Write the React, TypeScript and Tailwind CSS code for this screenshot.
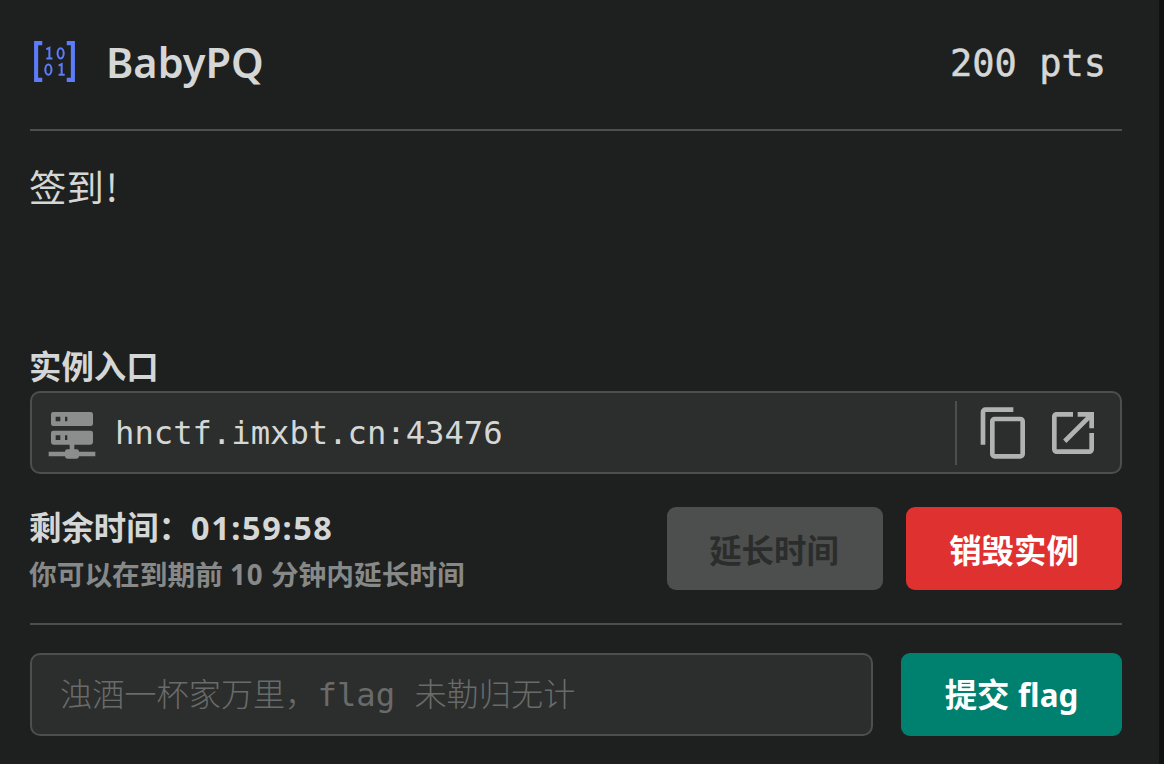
import React, { useState } from "react";

interface IconProps {
  path: string;
  className?: string;
}

const ICONS = {
  server:
    "M13,19H14A1,1 0 0,1 15,20H22V22H15A1,1 0 0,1 14,23H10A1,1 0 0,1 9,22H2V20H9A1,1 0 0,1 10,19H11V17H4A1,1 0 0,1 3,16V12A1,1 0 0,1 4,11H20A1,1 0 0,1 21,12V16A1,1 0 0,1 20,17H13V19M4,3H20A1,1 0 0,1 21,4V8A1,1 0 0,1 20,9H4A1,1 0 0,1 3,8V4A1,1 0 0,1 4,3M9,7H10V5H9V7M9,15H10V13H9V15M5,5V7H7V5H5M5,13V15H7V13H5Z",
  copy: "M19,21H8V7H19M19,5H8A2,2 0 0,0 6,7V21A2,2 0 0,0 8,23H19A2,2 0 0,0 21,21V7A2,2 0 0,0 19,5M16,1H4A2,2 0 0,0 2,3V17H4V3H16V1Z",
  open: "M14,3V5H17.59L7.76,14.83L9.17,16.24L19,6.41V10H21V3M19,19H5V5H12V3H5C3.89,3 3,3.9 3,5V19A2,2 0 0,0 5,21H19A2,2 0 0,0 21,19V12H19V19Z",
};

const Icon: React.FC<IconProps> = ({ path, className }) => (
  <svg viewBox="0 0 24 24" fill="currentColor" className={className}>
    <path d={path} />
  </svg>
);

const MatrixIcon: React.FC = () => (
  <svg
    viewBox="0 0 24 24"
    fill="none"
    stroke="currentColor"
    className="size-[49px] shrink-0 text-[#5c7cfa]"
  >
    <path d="M6,3H3V21H6M18,3H21V21H18" strokeWidth="2" />
    <ellipse cx="15" cy="8" rx="1.5" ry="2.5" />
    <ellipse cx="9" cy="16" rx="1.5" ry="2.5" />
    <path d="M8,6L9.5,5.3V10.5M8,10.5H11M14,14L15.5,13.3V18.5M14,18.5H17" />
  </svg>
);

const ChallengePage: React.FC = () => {
  const [flag, setFlag] = useState("");
  const entry = "hnctf.imxbt.cn:43476";

  const handleCopy = () => navigator.clipboard?.writeText(entry);

  return (
    <div className="flex h-[764px] w-[1164px] bg-[#101111] font-['Noto_Sans','Noto_Sans_CJK_SC',sans-serif] text-[#d5d7d6]">
      <div className="flex w-[1159px] flex-col bg-[#1e201f] pr-[37px] pl-[30px]">
        <header className="flex h-[131px] items-center border-b-2 border-[#4d4f4e] pr-4 pb-[6px]">
          <MatrixIcon />
          <h1 className="ml-[27px] pt-[2px] text-[41.5px] leading-none font-semibold">
            BabyPQ
          </h1>
          <span className="ml-auto pt-[3px] font-['DejaVu_Sans_Mono',monospace] text-[37px] leading-none [-webkit-text-stroke:0.5px]">
            200 pts
          </span>
        </header>

        <p className="-ml-px mt-[28px] h-[186px] font-['Noto_Sans_CJK_SC',sans-serif] text-[37.4px] leading-[54px]">
          签到<span className="ml-[2px]">!</span>
        </p>

        <h2 className="-ml-px h-[46px] text-[32.4px] leading-[42px] font-bold">
          实例入口
        </h2>
        <div className="flex h-[83px] items-center rounded-[10px] border-2 border-[#4d4f4e] bg-[#2c2e2d] pr-[19px] pl-3">
          <Icon
            path={ICONS.server}
            className="size-14 shrink-0 text-[#8b8e8d]"
          />
          <span className="ml-[15px] pt-[2px] font-['DejaVu_Sans_Mono',monospace] text-[32.2px] leading-none">
            {entry}
          </span>
          <div className="ml-auto flex h-16 items-center gap-[13px] border-l-2 border-[#4d4f4e] pl-[19px] text-[#b1b3b2]">
            <button onClick={handleCopy}>
              <Icon path={ICONS.copy} className="size-14" />
            </button>
            <button>
              <Icon path={ICONS.open} className="size-14" />
            </button>
          </div>
        </div>

        <div className="mt-[33px] flex h-[83px] font-bold">
          <div className="-ml-px flex-1 whitespace-nowrap">
            <p className="-mt-[2px] text-[32.4px] leading-[44px]">
              剩余时间：
              <span className="tracking-[1.65px]">01:59:58</span>
            </p>
            <p className="mt-[2px] text-[27.7px] leading-[46px] text-[#868988]">
              你可以在到期前 <span className="tracking-[1px]">10</span>{" "}
              分钟内延长时间
            </p>
          </div>
          <button
            disabled
            className="w-[216px] rounded-[9px] bg-[#4d4f4e] pt-[3px] pr-[2px] text-[32.4px] text-[#2b2d2c]"
          >
            延长时间
          </button>
          <button className="ml-[23px] w-[216px] rounded-[9px] bg-[#e03131] pt-[3px] text-[32.4px] text-white">
            销毁实例
          </button>
        </div>

        <div className="mt-[33px] flex border-t-2 border-[#4d4f4e] pt-7">
          <input
            type="text"
            value={flag}
            onChange={(e) => setFlag(e.target.value)}
            placeholder="浊酒一杯家万里，flag 未勒归无计"
            className="h-[83px] w-[843px] rounded-[10px] border-2 border-[#4d4f4e] bg-[#2c2e2d] px-7 font-['DejaVu_Sans_Mono','Noto_Sans_CJK_SC',monospace] text-[32.2px] font-light outline-none placeholder:text-[#696b6a]"
          />
          <button className="ml-7 h-[83px] w-[221px] rounded-[9px] bg-[#00806f] text-[32.4px] font-bold text-white">
            提交 <span className="text-[31.4px]">flag</span>
          </button>
        </div>
      </div>
    </div>
  );
};

export default ChallengePage;
